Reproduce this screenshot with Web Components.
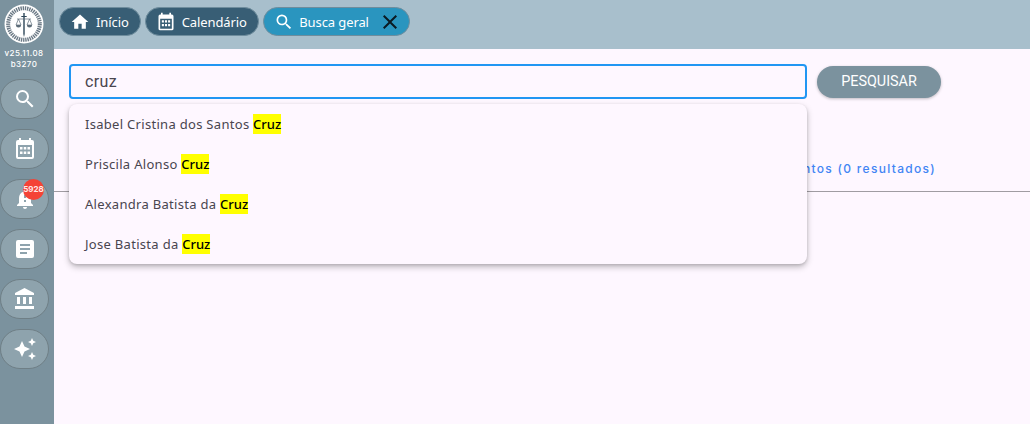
<!DOCTYPE html>
<html lang="pt"><head><meta charset="utf-8"><title>Busca geral</title>
<style>
html,body{margin:0;height:100%;overflow:hidden}
body{font-family:Roboto,"Noto Sans",sans-serif;background:#fef7ff}
app-shell{height:424px}
</style></head><body>
<template id="t-shell"><style>
:host{display:grid;grid-template-columns:54px 1fr;width:1030px;height:424px}
.main{display:flex;flex-direction:column;min-width:0;position:relative}
.top{height:49px;flex:none;background:#a8bfcc}
</style>
<slot name="side"></slot>
<div class="main"><div class="top"><slot name="tabs"></slot></div><slot></slot></div>
</template>

<template id="t-sidebar"><style>
:host{display:flex;flex-direction:column;background:#7b929e;height:424px;align-items:flex-start;box-sizing:border-box;padding-top:4px}
.logo{width:48px;height:40px;display:flex;justify-content:center;align-items:center}
.v{width:48px;text-align:center;color:#fff;font:500 8px/11px Inter,Roboto,sans-serif;letter-spacing:.45px;margin-top:4px;height:22px;margin-bottom:9px;white-space:nowrap}
.list{display:flex;flex-direction:column;gap:10px}
</style><div class="logo"><slot name="logo"></slot></div><div class="v">v25.11.08<br>b3270</div><div class="list"><slot></slot></div></template>

<template id="t-sidebtn"><style>
:host{display:flex;position:relative;box-sizing:border-box;width:49px;height:40px;border:1px solid #6f7f86;border-radius:20px;background:#8ea3ad;align-items:center;justify-content:center}
::slotted(svg){width:24px;height:24px;fill:#fff;display:block}
</style><slot></slot></template>

<template id="t-tab"><style>
:host{display:inline-flex;box-sizing:border-box;height:29px;border-radius:14.5px;align-items:center;background:#385e75;border:1px solid #6f8d9d;color:#fff;font:13px/20px "Noto Sans",Roboto,sans-serif;letter-spacing:-.1px;padding:0 11px 0 10px;gap:6px}
:host([active]){background:#2a95bf;padding-right:7px;gap:5.5px}
</style><slot></slot></template>

<template id="t-search"><style>
:host{display:flex;gap:10px;padding:15px 0 0 15px;align-items:center}
.inp{box-sizing:border-box;width:738px;height:35px;border:2px solid #2196f3;border-radius:4px;padding:1px 14px 0;display:flex;align-items:center;font:16px/20px Roboto,sans-serif;color:#49454f;letter-spacing:.4px}
.btn{box-sizing:border-box;width:124px;height:32px;border-radius:16px;background:#7b929e;color:#fff;display:flex;align-items:center;justify-content:center;font:14.4px/20px Roboto,"Noto Sans",sans-serif;box-shadow:0 1px 3px rgba(0,0,0,.25)}
</style><div class="inp"><slot name="q"></slot></div><div class="btn"><slot name="go"></slot></div></template>

<template id="t-results"><style>
:host{display:flex;justify-content:flex-end;box-sizing:border-box;height:93px;padding:60px 94px 0 0;border-bottom:1px solid #a09ca2;color:#4285f4;font:500 12px/20px Inter,Roboto,sans-serif;letter-spacing:1.3px}
</style><slot></slot></template>

<template id="t-menu"><style>
:host{position:absolute;left:15px;top:104px;width:738px;height:160px;border-radius:8px;background:#fef7ff;box-shadow:0 3px 6px rgba(0,0,0,.25),0 1px 3px rgba(0,0,0,.12);display:flex;flex-direction:column}
</style><slot></slot></template>

<template id="t-opt"><style>
:host{display:flex;align-items:center;height:40px;padding-left:16px;color:#49454f;font:13px/20px "Noto Sans",Roboto,sans-serif;letter-spacing:.3px;white-space:pre}
::slotted(mark){background:#ff0;color:#000;font-weight:500;letter-spacing:0}
</style><slot></slot></template>

<script>
for(const [n,id] of [['app-shell','t-shell'],['side-bar','t-sidebar'],['side-btn','t-sidebtn'],['nav-tab','t-tab'],['search-row','t-search'],['result-head','t-results'],['suggest-menu','t-menu'],['suggest-opt','t-opt']]){
 customElements.define(n,class extends HTMLElement{constructor(){super();this.attachShadow({mode:'open'}).append(document.getElementById(id).content.cloneNode(true))}});
}
customElements.define('tab-bar',class extends HTMLElement{constructor(){super();this.attachShadow({mode:'open'}).innerHTML='<style>:host{display:flex;gap:4px;padding:7px 0 0 5px}</style><slot></slot>'}});
customElements.define('count-badge',class extends HTMLElement{constructor(){super();this.attachShadow({mode:'open'}).innerHTML='<style>:host{position:absolute;left:22px;top:-1px;width:21px;height:21px;border-radius:50%;background:#f44336;color:#ffe9e8;display:flex;align-items:center;justify-content:center;font:700 8px/21px Inter,Roboto,sans-serif;}</style><slot></slot>'}});
</script>

<app-shell>
 <side-bar slot="side">
  <svg slot="logo" width="40" height="40" viewBox="0 0 40 40">
   <circle cx="20" cy="20" r="19.500" fill="#fff"/>
   <circle cx="20" cy="20" r="15.800" fill="none" stroke="#6c7a86" stroke-width="4" stroke-dasharray="1.400 .8"/>
   <circle cx="20" cy="20" r="13" fill="#fff"/>
   <path d="M19.300 9h1.400v3h2v1h-2v17l-.7 3-.7-3V13h-2v-1h2z" fill="#2d4658"/>
   <path d="M13 15h14M14.500 15l-2.500 6h5zM25.500 15l-2.500 6h5z" fill="none" stroke="#5c6c78" stroke-width=".7"/>
   <path d="M12 21a2.500 2.500 0 0 0 5 0zM23 21a2.500 2.500 0 0 0 5 0z" fill="#5c6c78"/>
  </svg>
  <side-btn><svg viewBox="0 0 24 24"><path d="M15.500 14h-.79l-.28-.27A6.470 6.470 0 0 0 16 9.500 6.500 6.500 0 1 0 9.500 16c1.610 0 3.090-.59 4.230-1.570l.27.28v.79l5 4.990L20.490 19zm-6 0C7.010 14 5 11.990 5 9.500S7.010 5 9.500 5 14 7.010 14 9.500 11.990 14 9.500 14"/></svg></side-btn>
  <side-btn><svg viewBox="0 0 24 24"><path fill-rule="evenodd" d="M6 1h2v2h8V1h2v2h1a2 2 0 0 1 2 2v15a2 2 0 0 1-2 2H5a2 2 0 0 1-2-2V5a2 2 0 0 1 2-2h1zM5 8v12h14V8z"/><path d="M7 10h2.500v2.500H7zM10.750 10h2.500v2.500h-2.500zM14.500 10H17v2.500h-2.500zM7 14.500h2.500V17H7zM10.750 14.500h2.500V17h-2.500zM14.500 14.500H17V17h-2.500z"/></svg></side-btn>
  <side-btn><svg viewBox="0 0 24 24"><path fill-rule="evenodd" d="M12 22c1.100 0 2-.9 2-2h-4c0 1.100.9 2 2 2m6-6v-5c0-3.070-1.630-5.640-4.500-6.320V4a1.500 1.500 0 0 0-3 0v.68C7.640 5.360 6 7.920 6 11v5l-2 2v1h16v-1zm-5-1h-2v-2h2zm0-4h-2V8h2z"/></svg><count-badge>5928</count-badge></side-btn>
  <side-btn><svg viewBox="0 0 24 24"><path d="M19 3H5a2 2 0 0 0-2 2v14a2 2 0 0 0 2 2h14a2 2 0 0 0 2-2V5a2 2 0 0 0-2-2m-5 14H7v-2h7zm3-4H7v-2h10zm0-4H7V7h10z"/></svg></side-btn>
  <side-btn><svg viewBox="0 0 24 24"><path d="M4 10v7h3v-7zm6 0v7h3v-7zM2 22h19v-3H2zm14-12v7h3v-7zM11.500 1 2 6v2h19V6z"/></svg></side-btn>
  <side-btn><svg viewBox="0 0 24 24"><path d="M19 9l1.250-2.750L23 5l-2.750-1.250L19 1l-1.250 2.750L15 5l2.750 1.250zM19 15l-1.250 2.750L15 19l2.750 1.250L19 23l1.250-2.750L23 19l-2.750-1.250zM11.500 9.500 9 4 6.500 9.500 1 12l5.500 2.500L9 20l2.500-5.500L17 12z"/></svg></side-btn>
 </side-bar>
 <tab-bar slot="tabs">
  <nav-tab><svg width="20" height="20" viewBox="0 0 24 24" fill="#fff"><path d="M10 20v-6h4v6h5v-8h3L12 3 2 12h3v8z"/></svg>Início</nav-tab>
  <nav-tab><svg width="20" height="20" viewBox="0 0 24 24" fill="#fff"><path fill-rule="evenodd" d="M6 1h2v2h8V1h2v2h1a2 2 0 0 1 2 2v15a2 2 0 0 1-2 2H5a2 2 0 0 1-2-2V5a2 2 0 0 1 2-2h1zM5 8v12h14V8z"/><path d="M7 10h2.500v2.500H7zM10.750 10h2.500v2.500h-2.500zM14.500 10H17v2.500h-2.500zM7 14.500h2.500V17H7zM10.750 14.500h2.500V17h-2.500zM14.500 14.500H17V17h-2.500z"/></svg>Calendário</nav-tab>
  <nav-tab active><svg width="20" height="20" viewBox="0 0 24 24" fill="#fff"><path d="M15.500 14h-.79l-.28-.27A6.470 6.470 0 0 0 16 9.500 6.500 6.500 0 1 0 9.500 16c1.610 0 3.090-.59 4.230-1.570l.27.28v.79l5 4.990L20.490 19zm-6 0C7.010 14 5 11.990 5 9.500S7.010 5 9.500 5 14 7.010 14 9.500 11.990 14 9.500 14"/></svg>Busca geral<svg width="24" height="24" viewBox="0 0 24 24" fill="#0b1a22" style="margin-left:4px"><path d="M19 6.410 17.590 5 12 10.590 6.410 5 5 6.410 10.590 12 5 17.590 6.410 19 12 13.410 17.590 19 19 17.590 13.410 12z"/></svg></nav-tab>
 </tab-bar>
 <search-row><span slot="q">cruz</span><span slot="go">PESQUISAR</span></search-row>
 <result-head>Documentos (0 resultados)</result-head>
 <suggest-menu>
  <suggest-opt>Isabel Cristina dos Santos <mark>Cruz</mark></suggest-opt>
  <suggest-opt>Priscila Alonso <mark>Cruz</mark></suggest-opt>
  <suggest-opt>Alexandra Batista da <mark>Cruz</mark></suggest-opt>
  <suggest-opt>Jose Batista da <mark>Cruz</mark></suggest-opt>
 </suggest-menu>
</app-shell>
</body></html>
